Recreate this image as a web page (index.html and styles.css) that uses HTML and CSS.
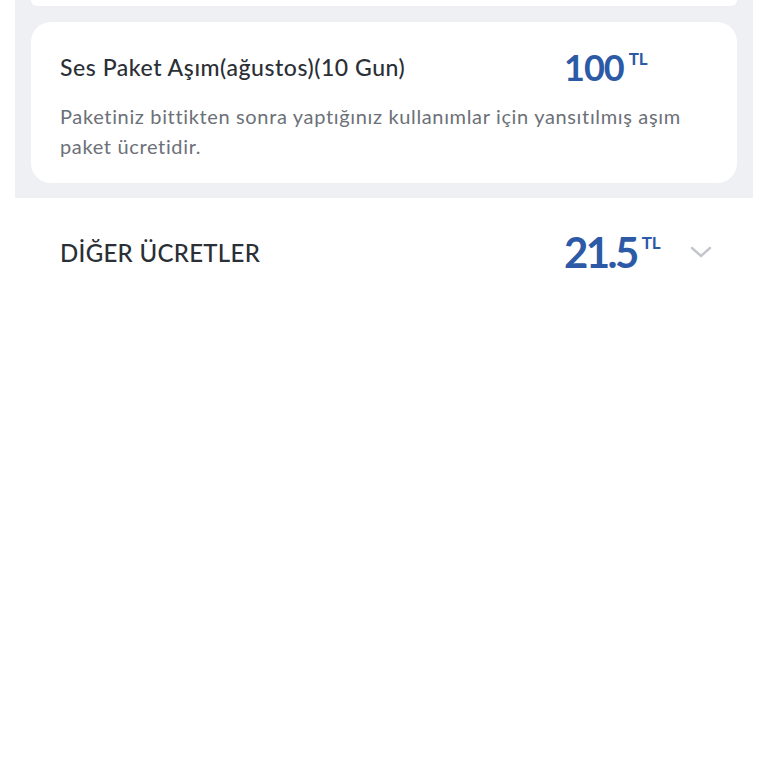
FILE: index.html
```html
<!DOCTYPE html>
<html lang="tr">
<head>
<meta charset="utf-8">
<link rel="stylesheet" href="styles.css">
</head>
<body>
<div class="panel">
  <div class="card card-top"></div>
  <div class="card">
    <div class="item-head">
      <div class="item-title">Ses Paket Aşım(ağustos)(10 Gun)</div>
      <div class="price price-md">100<span class="cur">TL</span></div>
    </div>
    <p class="item-desc">Paketiniz bittikten sonra yaptığınız kullanımlar için yansıtılmış aşım paket ücretidir.</p>
  </div>
</div>
<div class="section-row">
  <div class="section-title">DİĞER ÜCRETLER</div>
  <div class="price price-lg">21.5<span class="cur">TL</span></div>
  <svg class="chevron" width="22" height="12" viewBox="0 0 22 12"><path d="M2 2 L11 10 L20 2" fill="none" stroke="#c3c6ca" stroke-width="2.4" stroke-linecap="round" stroke-linejoin="round"/></svg>
</div>
</body>
</html>
```
FILE: styles.css
```css
* { box-sizing: border-box; }
html, body { margin: 0; padding: 0; background: #fff; }
body { font-family: Lato, "Noto Sans", sans-serif; color: #2b2f36; }
.panel {
  margin: 0 15px;
  background: #eef0f3;
  padding: 0 16px 15px;
  display: flex;
  flex-direction: column;
  gap: 16px;
}
.card {
  background: #fff;
  border-radius: 20px;
  padding: 25px 29px 22px;
}
.card-top { height: 6px; padding: 0; border-radius: 0 0 20px 20px; }
.item-head {
  display: grid;
  grid-template-columns: 1fr 144px;
  align-items: center;
}
.item-title { font-size: 23px; font-weight: 500; color: #2b2f36; letter-spacing: 0.55px; }
.price { color: #2c5aa6; font-weight: 700; display: flex; align-items: flex-start; letter-spacing: -1px; }
.price .cur { font-size: 17px; font-weight: 700; margin-left: 5px; letter-spacing: 0; line-height: 1; }
.price-md { font-size: 36px; line-height: 40px; }
.price-md .cur { margin-top: 3px; }
.price-lg { font-size: 42px; line-height: 48px; letter-spacing: -2.6px; }
.price-lg .cur { margin-top: 6px; margin-left: 5px; }
.item-desc {
  margin: 14px 0 0;
  font-size: 20px;
  line-height: 30px;
  color: #6c7078;
  letter-spacing: 0.65px;
}
.section-row {
  display: grid;
  grid-template-columns: 1fr 126px 22px;
  align-items: center;
  padding: 30px 56px 0 60px;
}
.section-title { font-size: 24px; font-weight: 500; color: #2b2f36; letter-spacing: 0.3px; }
.chevron { display: block; }
```
